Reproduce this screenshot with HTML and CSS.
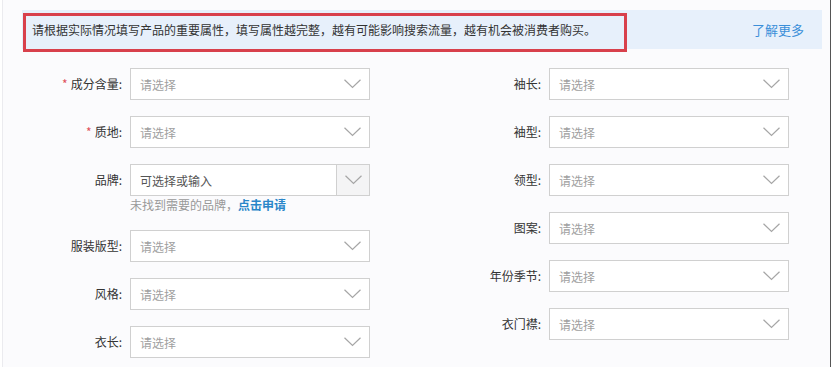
FILE: index.html
```html
<!DOCTYPE html>
<html>
<head>
    <meta charset="utf-8">
    <title>商品属性</title>
    <link rel="stylesheet" href="styles.css">
</head>
<body>
<div class="page">

    <div class="tip">
        <span class="tip-text">请根据实际情况填写产品的重要属性，填写属性越完整，越有可能影响搜索流量，越有机会被消费者购买。</span>
        <a class="tip-more" href="#">了解更多</a>
        <!-- annotation box drawn over the tip -->
        <div class="mark"></div>
    </div>

    <div class="form">
        <div class="col">
            <div class="row">
                <label class="lbl"><span class="req">*</span>成分含量:</label>
                <div class="sel"><span class="ph">请选择</span><svg class="arr" width="17" height="10" viewBox="0 0 17 10"><path d="M0.5 0.8 L8.5 8.5 L16.5 0.8" fill="none" stroke="#a6a6a6" stroke-width="1.2"/></svg></div>
            </div>
            <div class="row">
                <label class="lbl"><span class="req">*</span>质地:</label>
                <div class="sel"><span class="ph">请选择</span><svg class="arr" width="17" height="10" viewBox="0 0 17 10"><path d="M0.5 0.8 L8.5 8.5 L16.5 0.8" fill="none" stroke="#a6a6a6" stroke-width="1.2"/></svg></div>
            </div>
            <div class="row">
                <label class="lbl">品牌:</label>
                <div class="field">
                    <div class="sel combo"><span class="ph dark">可选择或输入</span><span class="btn"><svg width="17" height="10" viewBox="0 0 17 10"><path d="M0.5 0.8 L8.5 8.5 L16.5 0.8" fill="none" stroke="#a6a6a6" stroke-width="1.2"/></svg></span></div>
                    <div class="help">未找到需要的品牌，<a href="#">点击申请</a></div>
                </div>
            </div>
            <div class="row">
                <label class="lbl">服装版型:</label>
                <div class="sel"><span class="ph">请选择</span><svg class="arr" width="17" height="10" viewBox="0 0 17 10"><path d="M0.5 0.8 L8.5 8.5 L16.5 0.8" fill="none" stroke="#a6a6a6" stroke-width="1.2"/></svg></div>
            </div>
            <div class="row">
                <label class="lbl">风格:</label>
                <div class="sel"><span class="ph">请选择</span><svg class="arr" width="17" height="10" viewBox="0 0 17 10"><path d="M0.5 0.8 L8.5 8.5 L16.5 0.8" fill="none" stroke="#a6a6a6" stroke-width="1.2"/></svg></div>
            </div>
            <div class="row">
                <label class="lbl">衣长:</label>
                <div class="sel"><span class="ph">请选择</span><svg class="arr" width="17" height="10" viewBox="0 0 17 10"><path d="M0.5 0.8 L8.5 8.5 L16.5 0.8" fill="none" stroke="#a6a6a6" stroke-width="1.2"/></svg></div>
            </div>
        </div>

        <div class="col">
            <div class="row">
                <label class="lbl">袖长:</label>
                <div class="sel"><span class="ph">请选择</span><svg class="arr" width="17" height="10" viewBox="0 0 17 10"><path d="M0.5 0.8 L8.5 8.5 L16.5 0.8" fill="none" stroke="#a6a6a6" stroke-width="1.2"/></svg></div>
            </div>
            <div class="row">
                <label class="lbl">袖型:</label>
                <div class="sel"><span class="ph">请选择</span><svg class="arr" width="17" height="10" viewBox="0 0 17 10"><path d="M0.5 0.8 L8.5 8.5 L16.5 0.8" fill="none" stroke="#a6a6a6" stroke-width="1.2"/></svg></div>
            </div>
            <div class="row">
                <label class="lbl">领型:</label>
                <div class="sel"><span class="ph">请选择</span><svg class="arr" width="17" height="10" viewBox="0 0 17 10"><path d="M0.5 0.8 L8.5 8.5 L16.5 0.8" fill="none" stroke="#a6a6a6" stroke-width="1.2"/></svg></div>
            </div>
            <div class="row">
                <label class="lbl">图案:</label>
                <div class="sel"><span class="ph">请选择</span><svg class="arr" width="17" height="10" viewBox="0 0 17 10"><path d="M0.5 0.8 L8.5 8.5 L16.5 0.8" fill="none" stroke="#a6a6a6" stroke-width="1.2"/></svg></div>
            </div>
            <div class="row">
                <label class="lbl">年份季节:</label>
                <div class="sel"><span class="ph">请选择</span><svg class="arr" width="17" height="10" viewBox="0 0 17 10"><path d="M0.5 0.8 L8.5 8.5 L16.5 0.8" fill="none" stroke="#a6a6a6" stroke-width="1.2"/></svg></div>
            </div>
            <div class="row">
                <label class="lbl">衣门襟:</label>
                <div class="sel"><span class="ph">请选择</span><svg class="arr" width="17" height="10" viewBox="0 0 17 10"><path d="M0.5 0.8 L8.5 8.5 L16.5 0.8" fill="none" stroke="#a6a6a6" stroke-width="1.2"/></svg></div>
            </div>
        </div>
    </div>

</div>
</body>
</html>
```

FILE: styles.css
```css
html, body {
    margin: 0;
    padding: 0;
    background: #fff;
}
body {
    font-family: "Noto Sans CJK SC", "Noto Sans", sans-serif;
    font-size: 12px;
    color: #333;
}
.page {
    box-sizing: border-box;
    margin-left: 2px;
    width: 829px;
    height: 367px;
    padding: 10px 0 0 19px;
    background: #fbfbfd;
    border-left: 1px solid #ebebef;
    border-right: 1px solid #555;
}
.tip {
    position: relative;
    box-sizing: border-box;
    width: 800px;
    height: 39px;
    padding: 0 18px 0 10px;
    display: flex;
    align-items: center;
    justify-content: space-between;
    background: #e7f0fb;
}
.tip-text {
    color: #333;
}
.tip-more {
    font-size: 13px;
    color: #3b8fd9;
    text-decoration: none;
}
.mark {
    position: absolute;
    left: 1px;
    top: 3px;
    width: 598px;
    height: 33px;
    border: 3px solid #d8404c;
}
.form {
    display: grid;
    grid-template-columns: 419px 1fr;
    margin-top: 19px;
}
.col {
    display: flex;
    flex-direction: column;
    gap: 16px;
}
.row {
    display: flex;
    align-items: flex-start;
}
.lbl {
    box-sizing: border-box;
    width: 108px;
    padding-right: 8px;
    line-height: 32px;
    text-align: right;
    color: #333;
}
.req {
    color: #e0505a;
    margin-right: 3px;
}
.sel {
    box-sizing: border-box;
    width: 240px;
    height: 32px;
    display: flex;
    align-items: center;
    justify-content: space-between;
    padding: 0 8px 0 9px;
    background: #fff;
    border: 1px solid #d0d0d0;
}
.ph {
    color: #a0a0a0;
}
.ph.dark {
    color: #555;
}
.arr {
    display: block;
}
.combo {
    padding-right: 0;
}
.btn {
    box-sizing: border-box;
    width: 33px;
    height: 30px;
    display: flex;
    align-items: center;
    justify-content: center;
    background: #f4f4f5;
    border-left: 1px solid #d0d0d0;
}
.help {
    line-height: 18px;
    color: #999;
}
.help a {
    color: #2a86c9;
    font-weight: bold;
    text-decoration: none;
}
```
